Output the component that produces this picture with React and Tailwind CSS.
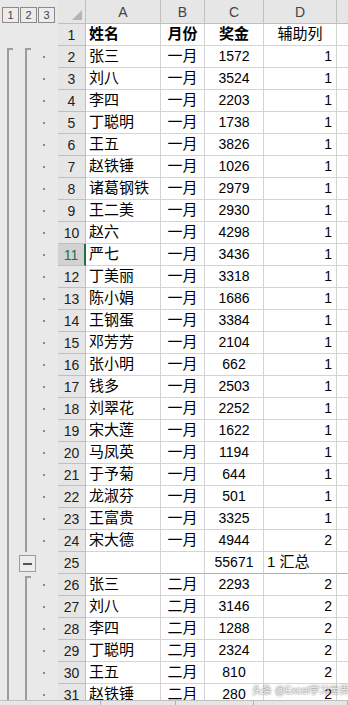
const font = "font-['Liberation_Sans','Noto_Sans_CJK_SC',sans-serif]";

const rows = [
  ["张三", "一月", 1572, 1],
  ["刘八", "一月", 3524, 1],
  ["李四", "一月", 2203, 1],
  ["丁聪明", "一月", 1738, 1],
  ["王五", "一月", 3826, 1],
  ["赵铁锤", "一月", 1026, 1],
  ["诸葛钢铁", "一月", 2979, 1],
  ["王二美", "一月", 2930, 1],
  ["赵六", "一月", 4298, 1],
  ["严七", "一月", 3436, 1],
  ["丁美丽", "一月", 3318, 1],
  ["陈小娟", "一月", 1686, 1],
  ["王钢蛋", "一月", 3384, 1],
  ["邓芳芳", "一月", 2104, 1],
  ["张小明", "一月", 662, 1],
  ["钱多", "一月", 2503, 1],
  ["刘翠花", "一月", 2252, 1],
  ["宋大莲", "一月", 1622, 1],
  ["马凤英", "一月", 1194, 1],
  ["于予菊", "一月", 644, 1],
  ["龙淑芬", "一月", 501, 1],
  ["王富贵", "一月", 3325, 1],
  ["宋大德", "一月", 4944, 2],
  null,
  ["张三", "二月", 2293, 2],
  ["刘八", "二月", 3146, 2],
  ["李四", "二月", 1288, 2],
  ["丁聪明", "二月", 2324, 2],
  ["王五", "二月", 810, 2],
  ["赵铁锤", "二月", 280, 2],
];

// outline brackets on the left: level 1 outer, level 2 per month, dots for detail rows
function Outline({ n }) {
  const first = n === 2;
  const summary = n === 25;
  const groupStart = n === 26;
  return (
    <div className="flex w-[58px] shrink-0 bg-[#e9e9e9]">
      <div className="w-[18px] flex">
        <div
          className={
            first
              ? "ml-[7px] mt-[2px] w-[6px] border-l-2 border-t-2 border-[#9c9c9c]"
              : "ml-[7px] w-[6px] border-l-2 border-[#9c9c9c]"
          }
        />
      </div>
      <div className="w-[18px] flex">
        {summary ? (
          <div className="ml-[1px] mt-[3px] w-[17px] h-[17px] border border-[#9c9c9c] bg-[#ededed] flex items-center justify-center">
            <div className="w-[9px] h-[2px] bg-[#555]" />
          </div>
        ) : (
          <div
            className={
              first || groupStart
                ? "ml-[7px] mt-[2px] w-[6px] border-l-2 border-t-2 border-[#9c9c9c]"
                : "ml-[7px] w-[6px] border-l-2 border-[#9c9c9c]"
            }
          />
        )}
      </div>
      <div className="flex-1 flex items-center">
        {!summary && <div className="ml-[7px] w-[2px] h-[2px] bg-[#8c8c8c]" />}
      </div>
    </div>
  );
}

function RowHead({ n }) {
  const active = n === 11;
  return (
    <div
      className={
        active
          ? "w-[28px] shrink-0 border-b border-[#bfbfbf] border-r-2 border-r-[#217346] bg-[#d2d2d2] text-[#217346] text-[14px] flex items-center justify-center pt-[2px]"
          : "w-[28px] shrink-0 border-b border-r border-[#bfbfbf] bg-[#e6e6e6] text-[#222] text-[14px] flex items-center justify-center pt-[2px]"
      }
    >
      {n}
    </div>
  );
}

function DataRow({ n, r }) {
  const line = n === 25 ? "border-b-[#b0b0b0]" : "border-b-[#d4d4d4]";
  return (
    <div className="flex h-[22px] shrink-0">
      <Outline n={n} />
      <RowHead n={n} />
      <div className={`w-[75px] border-r border-b border-[#d4d4d4] ${line} pl-[3px] flex items-center text-[15px] text-black whitespace-nowrap overflow-hidden`}>
        {r ? r[0] : ""}
      </div>
      <div className={`w-[44px] border-r border-b border-[#d4d4d4] ${line} flex items-center justify-center text-[15px] text-black`}>
        {r ? r[1] : ""}
      </div>
      <div className={`w-[59px] border-r border-b border-[#d4d4d4] ${line} flex items-center justify-center text-[14px] text-black`}>
        {r ? r[2] : 55671}
      </div>
      <div className={`w-[73px] border-r border-b border-[#d4d4d4] ${line} flex items-center text-black ${r ? "justify-end pr-[4px] text-[14px]" : "pl-[3px] text-[15px]"}`}>
        {r ? r[3] : "1 汇总"}
      </div>
      <div className={`flex-1 border-b border-[#d4d4d4] ${line}`} />
    </div>
  );
}

export default function App() {
  return (
    <div className={`relative w-[348px] h-[705px] overflow-hidden bg-white ${font}`}>
      <div className="flex h-[24px]">
        <div className="w-[58px] shrink-0 bg-[#e9e9e9] flex gap-px pl-[2px] pt-[7px]">
          {["1", "2", "3"].map((l) => (
            <div
              key={l}
              className="w-[17px] h-[16px] border border-[#8a8a8a] bg-[#ececec] text-[11px] text-[#444] flex items-center justify-center"
            >
              {l}
            </div>
          ))}
        </div>
        <div className="w-[28px] shrink-0 bg-[#e6e6e6] border-r border-b border-[#bfbfbf]">
          <svg width="27" height="23" viewBox="0 0 27 23">
            <polygon points="24,10 24,20 14,20" fill="#b5b5b5" />
          </svg>
        </div>
        {[["A", "w-[75px]"], ["B", "w-[44px]"], ["C", "w-[59px]"], ["D", "w-[73px]"]].map(([c, w]) => (
          <div
            key={c}
            className={`${w} bg-[#e6e6e6] border-r border-b border-[#bfbfbf] flex items-center justify-center text-[14px] text-[#444] pt-[2px]`}
          >
            {c}
          </div>
        ))}
        <div className="flex-1 bg-[#e6e6e6] border-b border-[#bfbfbf]" />
      </div>

      <div className="flex h-[22px]">
        <div className="w-[58px] shrink-0 bg-[#e9e9e9]" />
        <RowHead n={1} />
        <div className="w-[75px] border-r border-b border-[#d4d4d4] pl-[3px] flex items-center text-[15px] font-bold text-black">姓名</div>
        <div className="w-[44px] border-r border-b border-[#d4d4d4] flex items-center justify-center text-[15px] font-bold text-black">月份</div>
        <div className="w-[59px] border-r border-b border-[#d4d4d4] flex items-center justify-center text-[15px] font-bold text-black">奖金</div>
        <div className="w-[73px] border-r border-b border-[#d4d4d4] flex items-center justify-center text-[15px] text-black">辅助列</div>
        <div className="flex-1 border-b border-[#d4d4d4]" />
      </div>

      {rows.slice(0, 29).map((r, i) => (
        <DataRow key={i} n={i + 2} r={r} />
      ))}
      <div className="h-[16px] overflow-hidden">
        <DataRow n={31} r={rows[29]} />
      </div>

      <div className="flex h-[5px] bg-[#e6e6e6] border-t border-[#c0c0c0]">
        <div className="w-[100px]" />
        <div className="w-[75px] border-l border-[#b0b0b0]" />
        <div className="w-[78px] border-l border-[#b0b0b0]" />
        <div className="w-[94px] border-l border-[#b0b0b0]" />
        <div className="flex-1 border-l border-[#b0b0b0]" />
      </div>

      <div className="absolute left-[252px] top-[685px] text-[10px] leading-[12px] text-[#f2f2f2] whitespace-nowrap [text-shadow:0_0_2px_rgba(0,0,0,0.75)]">
        头条 @Excel学习世界
      </div>
    </div>
  );
}
